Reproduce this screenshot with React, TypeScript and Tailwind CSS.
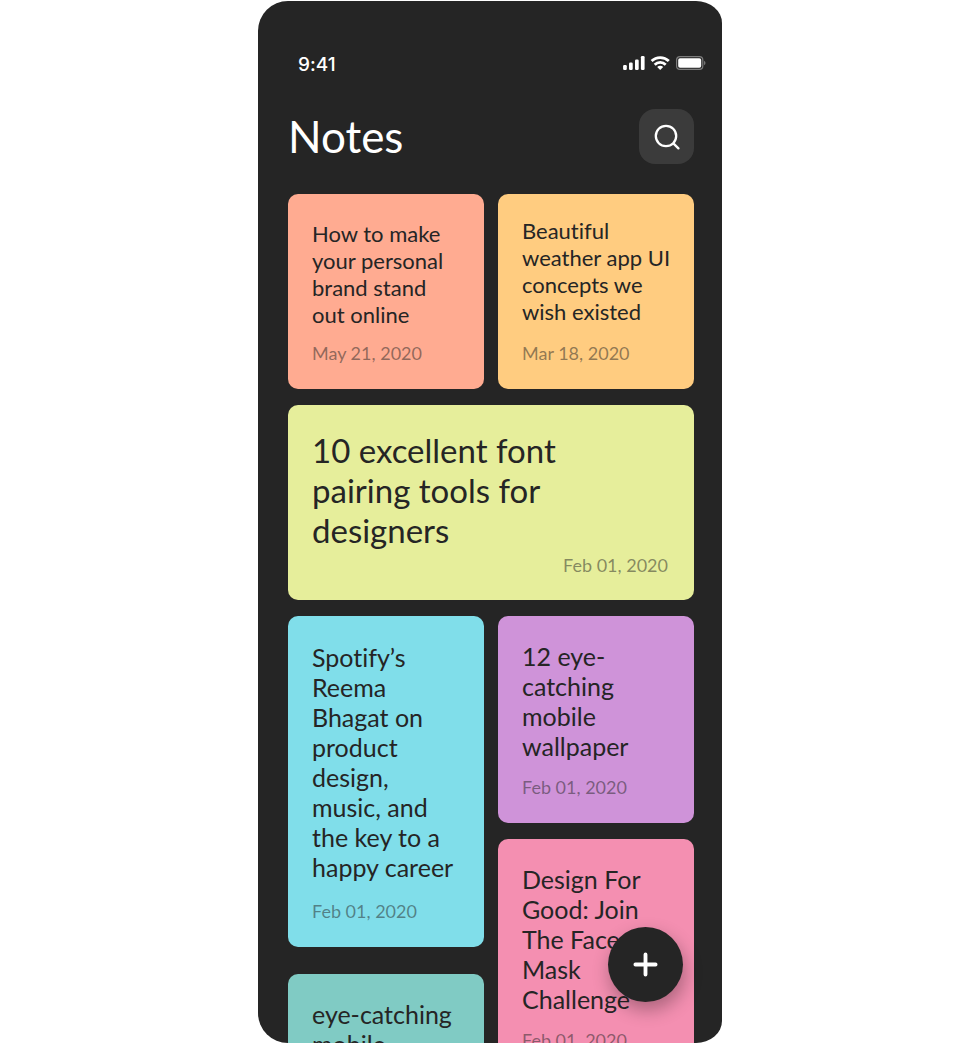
type Note = {
  title: string;
  date: string;
  card: string;
  text: string;
};

const SMALL = "text-[22px] leading-[27px]";
const MEDIUM = "text-[25px] leading-[30px]";

const topNotes: Note[] = [
  {
    title: "How to make\nyour personal\nbrand stand\nout online",
    date: "May 21, 2020",
    card: "bg-[#ffab91] pt-[26px] min-h-[195px]",
    text: SMALL,
  },
  {
    title: "Beautiful\nweather app UI\nconcepts we\nwish existed",
    date: "Mar 18, 2020",
    card: "bg-[#ffcc80] pt-[23px] min-h-[195px]",
    text: SMALL,
  },
];

const leftNotes: Note[] = [
  {
    title:
      "Spotify’s\nReema\nBhagat on\nproduct\ndesign,\nmusic, and\nthe key to a\nhappy career",
    date: "Feb 01, 2020",
    card: "bg-[#80deea] pt-[26px] min-h-[331px]",
    text: MEDIUM,
  },
  {
    title: "eye-catching\nmobile\nwallpaper",
    date: "Feb 01, 2020",
    card: "bg-[#80cbc4] pt-[25px] min-h-[207px]",
    text: MEDIUM,
  },
];

const rightNotes: Note[] = [
  {
    title: "12 eye-\ncatching\nmobile\nwallpaper",
    date: "Feb 01, 2020",
    card: "bg-[#cf93d9] pt-[25px] min-h-[207px]",
    text: MEDIUM,
  },
  {
    title: "Design For\nGood: Join\nThe Face\nMask\nChallenge",
    date: "Feb 01, 2020",
    card: "bg-[#f48fb1] pt-[25px] min-h-[237px]",
    text: MEDIUM,
  },
];

function NoteCard({ note }: { note: Note }) {
  return (
    <article
      className={`flex shrink-0 flex-col rounded-[10px] pr-2 pb-6 pl-6 ${note.card}`}
    >
      <h2 className={`whitespace-pre-line text-[#252525] ${note.text}`}>
        {note.title}
      </h2>
      <p className="mt-auto text-[18px] leading-6 text-[#252525]/50">
        {note.date}
      </p>
    </article>
  );
}

function StatusIcons() {
  return (
    <svg width="83" height="14" viewBox="0 0 83 14" fill="none" aria-hidden="true">
      <g fill="#fff">
        <rect x="0.1" y="9" width="3.7" height="5" rx="1.2" />
        <rect x="6" y="6.6" width="3.7" height="7.4" rx="1.2" />
        <rect x="12" y="3.6" width="3.7" height="10.4" rx="1.2" />
        <rect x="17.9" y="0" width="3.7" height="14" rx="1.2" />
        <path d="M37.2 14 L34.2 11 A4.2 4.2 0 0 1 40.2 11 Z" />
      </g>
      <g stroke="#fff" strokeWidth="2.8">
        <path d="M28.6 5.1 A12.3 12.3 0 0 1 45.8 5.1" />
        <path d="M31.7 8.7 A7.9 7.9 0 0 1 42.7 8.7" />
      </g>
      <rect x="53.6" y="0.6" width="26.2" height="12.8" rx="3.4" stroke="#fff" strokeOpacity="0.4" strokeWidth="1.2" />
      <rect x="55.2" y="2.2" width="23" height="9.6" rx="1.8" fill="#fff" />
      <path d="M81.2 4.8 a2.6 2.6 0 0 1 0 4.4 Z" fill="#fff" fillOpacity="0.45" />
    </svg>
  );
}

export default function App() {
  return (
    <div className="flex h-screen justify-center bg-white py-px font-['Lato','Open_Sans',sans-serif] [font-variant-ligatures:none]">
      <div className="relative flex w-full max-w-[464px] flex-col overflow-hidden rounded-[30px_26px_26px_30px/30px_22px_22px_30px] bg-[#252525]">
        <div className="flex shrink-0 items-start justify-between pt-[50px] pr-4 pl-10">
          <time className="font-['Inter',sans-serif] text-[19px] leading-7 font-medium text-white">
            9:41
          </time>
          <div className="pt-[5px]">
            <StatusIcons />
          </div>
        </div>

        <header className="flex shrink-0 items-center justify-between pt-[30px] pr-7 pl-[30px]">
          <h1 className="text-[44px] leading-[55px] text-white">Notes</h1>
          <button
            type="button"
            aria-label="Search notes"
            className="flex size-[55px] items-center justify-center rounded-2xl bg-[#3b3b3b]"
          >
            <svg width="26" height="26" viewBox="0 0 26 26" fill="none" stroke="#fff" strokeWidth="2.3" strokeLinecap="round" aria-hidden="true">
              <circle cx="12" cy="12" r="10.2" />
              <path d="M19.6 19.6 L24.4 24.4" />
            </svg>
          </button>
        </header>

        <main className="flex flex-col gap-4 pt-[30px] pr-7 pl-[30px]">
          <div className="grid grid-cols-2 gap-[14px]">
            {topNotes.map((note) => (
              <NoteCard key={note.title} note={note} />
            ))}
          </div>

          <article className="flex flex-col gap-[3px] rounded-[10px] bg-[#e6ee9b] pt-[25px] pr-[26px] pb-[23px] pl-6">
            <h2 className="text-[33px] leading-10 whitespace-pre-line text-[#252525]">
              {"10 excellent font\npairing tools for\ndesigners"}
            </h2>
            <p className="self-end text-[18px] leading-6 text-[#252525]/50">
              Feb 01, 2020
            </p>
          </article>

          <div className="grid grid-cols-2 items-start gap-[14px]">
            <div className="flex flex-col gap-[27px]">
              {leftNotes.map((note) => (
                <NoteCard key={note.title} note={note} />
              ))}
            </div>
            <div className="flex flex-col gap-4">
              {rightNotes.map((note) => (
                <NoteCard key={note.title} note={note} />
              ))}
            </div>
          </div>
        </main>

        <button
          type="button"
          aria-label="Add note"
          className="absolute right-[39px] bottom-[41px] flex size-[75px] items-center justify-center rounded-full bg-[#252525] shadow-[2px_8px_18px_rgba(0,0,0,0.3)]"
        >
          <svg width="25" height="25" viewBox="0 0 26 26" stroke="#fff" strokeWidth="4" strokeLinecap="round" aria-hidden="true">
            <path d="M13 2.5 V23.5 M2.5 13 H23.5" />
          </svg>
        </button>
      </div>
    </div>
  );
}
